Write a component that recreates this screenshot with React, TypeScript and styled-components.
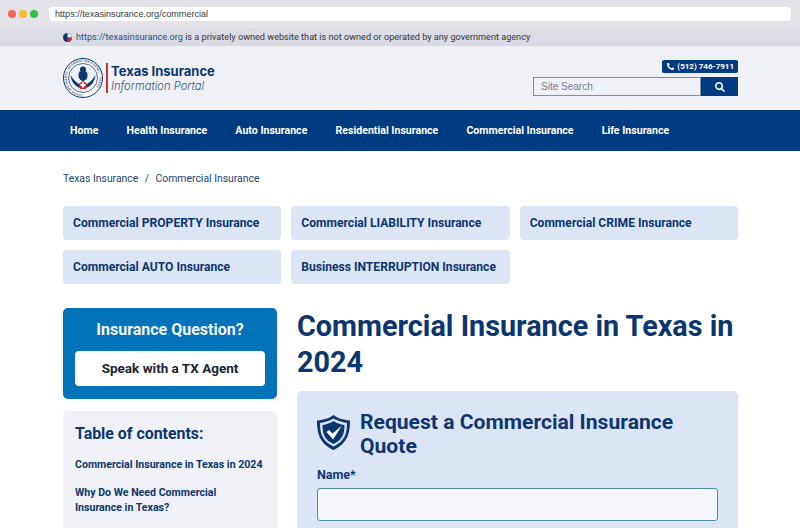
import { createGlobalStyle } from "styled-components";
import styled from "styled-components";
import { FaPhoneAlt, FaSearch } from "react-icons/fa";

const GlobalStyle = createGlobalStyle`
  html, body {
    margin: 0;
    padding: 0;
    background: #fff;
    overflow: hidden;
  }
  * {
    box-sizing: border-box;
  }
  body {
    font-family: "Roboto", "Liberation Sans", sans-serif;
  }
`;

const Page = styled.div`
  width: 800px;
  height: 528px;
  overflow: hidden;
`;

const BrowserBar = styled.div`
  height: 28px;
  background: #e3e3e9;
  display: flex;
  align-items: flex-start;
  padding: 7px 9px 0 8px;
`;

const Dots = styled.div`
  display: flex;
  gap: 3px;
  width: 41px;
  padding-top: 3px;
`;

const Dot = styled.span<{ $color: string }>`
  width: 8px;
  height: 8px;
  border-radius: 50%;
  background: ${props => props.$color};
`;

const UrlBar = styled.div`
  flex: 1;
  height: 14px;
  background: #fff;
  border-radius: 4px;
  padding-left: 6px;
  font-family: "Liberation Sans", sans-serif;
  font-size: 9.1px;
  line-height: 14px;
  color: #3a3a40;
`;

const Notice = styled.div`
  height: 18px;
  background: linear-gradient(#dddee6, #d8d9e2);
  display: flex;
  align-items: center;
  gap: 4px;
  padding: 0 63px;
  font-size: 9.15px;
  color: #35353b;
  a {
    color: #1f4f8c;
  }
`;

const Header = styled.header`
  height: 64px;
  background: #f0f1f7;
  display: flex;
  justify-content: space-between;
  padding: 12px 62px 0 63px;
`;

const Logo = styled.div`
  display: flex;
  align-items: flex-start;
  gap: 3px;
`;

const LogoRule = styled.span`
  width: 2px;
  height: 30px;
  margin-top: 5px;
  background: #c8372f;
`;

const LogoText = styled.div`
  padding-top: 5px;
`;

const LogoTitle = styled.div`
  font-family: "Inter", sans-serif;
  font-size: 13px;
  line-height: 16px;
  font-weight: 700;
  color: #0c366f;
`;

const LogoSub = styled.div`
  font-family: "Inter", sans-serif;
  font-size: 11.2px;
  line-height: 14px;
  font-style: italic;
  font-weight: 300;
  color: #3d5373;
`;

const HeaderRight = styled.div`
  display: flex;
  flex-direction: column;
  align-items: flex-end;
  gap: 4px;
  padding-top: 2px;
`;

const Phone = styled.div`
  height: 13px;
  padding: 0 4px 0 5px;
  display: flex;
  align-items: center;
  gap: 3px;
  background: #003a80;
  border-radius: 2px;
  color: #fff;
  font-size: 8px;
  font-weight: 700;
  svg {
    width: 7px;
    height: 7px;
  }
`;

const SearchRow = styled.div`
  display: flex;
  width: 205px;
  height: 19px;
`;

const SearchInput = styled.div`
  flex: 1;
  border: 1px solid #6f93a8;
  padding-left: 7px;
  font-family: "Liberation Sans", sans-serif;
  font-size: 10px;
  line-height: 17px;
  color: #7b7b85;
`;

const SearchButton = styled.div`
  width: 37px;
  background: #003a80;
  color: #fff;
  display: flex;
  align-items: center;
  justify-content: center;
  svg {
    width: 10px;
    height: 10px;
  }
`;

const Nav = styled.nav`
  height: 41px;
  background: #003a80;
  display: flex;
  align-items: center;
  gap: 28.1px;
  padding-left: 70px;
`;

const NavItem = styled.a`
  color: #fff;
  font-size: 10.6px;
  font-weight: 700;
`;

const Main = styled.main`
  padding: 0 62px 0 63px;
`;

const Crumbs = styled.div`
  display: flex;
  gap: 6.5px;
  padding-top: 21px;
  height: 55px;
  font-size: 10.4px;
  line-height: 13px;
  color: #1d4474;
`;

const Tiles = styled.div`
  display: grid;
  grid-template-columns: repeat(3, 1fr);
  gap: 10px;
  margin-bottom: 24px;
`;

const Tile = styled.a`
  height: 34px;
  padding-left: 10px;
  display: flex;
  align-items: center;
  background: #dce5f6;
  border-radius: 4px;
  color: #0c366f;
  font-size: 12.1px;
  font-weight: 700;
`;

const Columns = styled.div`
  display: grid;
  grid-template-columns: 214px 1fr;
  gap: 20px;
`;

const Sidebar = styled.aside`
  display: flex;
  flex-direction: column;
  gap: 12px;
`;

const AgentCard = styled.div`
  height: 91px;
  padding: 13px 12px 12px;
  background: #0272b9;
  border-radius: 5px;
  text-align: center;
`;

const AgentTitle = styled.div`
  color: #f2f6fb;
  font-size: 16px;
  font-weight: 700;
  line-height: 18px;
  margin-bottom: 12px;
`;

const AgentButton = styled.div`
  height: 35px;
  line-height: 35px;
  background: #fff;
  border-radius: 4px;
  color: #1c2432;
  font-size: 13.5px;
  font-weight: 700;
`;

const Toc = styled.div`
  height: 200px;
  padding: 14px 12px;
  background: #f0f1f7;
  border-radius: 5px;
`;

const TocTitle = styled.div`
  color: #0c366f;
  font-size: 15.9px;
  font-weight: 700;
  line-height: 18px;
  margin-bottom: 14px;
`;

const TocLink = styled.a`
  display: block;
  color: #0c366f;
  font-size: 10.6px;
  font-weight: 700;
  line-height: 15px;
  margin-bottom: 13px;
`;

const Content = styled.div``;

const Heading = styled.h1`
  margin: 0 0 11px;
  color: #0c366f;
  font-size: 28.8px;
  font-weight: 700;
  line-height: 36px;
`;

const QuoteCard = styled.div`
  height: 200px;
  padding: 20px;
  background: #dce5f6;
  border-radius: 5px;
`;

const QuoteHead = styled.div`
  display: flex;
  align-items: center;
  gap: 10px;
  margin-bottom: 9px;
  svg {
    flex: none;
    margin-top: -5px;
  }
`;

const QuoteTitle = styled.h2`
  margin: -1px 0 1px;
  color: #0c366f;
  font-size: 21.1px;
  font-weight: 700;
  line-height: 24px;
`;

const FieldLabel = styled.div`
  color: #0c366f;
  font-size: 12.5px;
  font-weight: 700;
  line-height: 14px;
  margin-bottom: 6px;
`;

const FieldInput = styled.div`
  height: 33px;
  background: #f4f6fb;
  border: 1px solid #4f8aa8;
  border-radius: 3px;
`;

const navItems = [
  "Home",
  "Health Insurance",
  "Auto Insurance",
  "Residential Insurance",
  "Commercial Insurance",
  "Life Insurance",
];

const tiles = [
  "Commercial PROPERTY Insurance",
  "Commercial LIABILITY Insurance",
  "Commercial CRIME Insurance",
  "Commercial AUTO Insurance",
  "Business INTERRUPTION Insurance",
];

function Seal() {
  return (
    <svg width="40" height="40" viewBox="0 0 40 40">
      <circle cx="20" cy="20" r="19.5" fill="#fff" stroke="#0c366f" strokeWidth="1" />
      <circle cx="20" cy="20" r="14.5" fill="#eef1f7" stroke="#0c366f" strokeWidth="0.7" />
      <defs>
        <path id="sealRing" d="M20 36.200a16.200 16.200 0 1 1 .01 0" />
      </defs>
      <text fontSize="3" fontWeight="700" fill="#2a4a78" letterSpacing="0.35">
        <textPath href="#sealRing">TEXAS INSURANCE INFORMATION PORTAL · TEXAS</textPath>
      </text>
      <circle cx="20" cy="11.500" r="3" fill="#0c366f" />
      <path d="M16.500 13.500h7c1.500 2.500 1.500 6-.5 8l-3 2-3-2c-2-2-2-5.500-.5-8z" fill="#0c366f" />
      <path d="M7.500 17c.5 6.500 4.500 11.500 10.500 13.500l1-3c-4-1.500-8.500-5-11.500-10.500z" fill="#0c366f" />
      <path d="M32.500 17c-.5 6.500-4.500 11.500-10.500 13.500l-1-3c4-1.500 8.500-5 11.500-10.500z" fill="#0c366f" />
      <path d="M20 23l4.500 3-1.500 5h-6l-1.500-5z" fill="#c8312b" />
      <path d="M19 24.500h2V26h1.500v2H21v1.500h-2V28h-1.500v-2H19z" fill="#fff" />
    </svg>
  );
}

function TexasDot() {
  return (
    <svg width="9" height="9" viewBox="0 0 9 9">
      <circle cx="4.500" cy="4.500" r="4.500" fill="#0c366f" />
      <path d="M4.500 0A4.500 4.500 0 0 1 9 4.500H4.500z" fill="#eef0f6" />
      <path d="M9 4.500A4.500 4.500 0 0 1 4.500 9V4.500z" fill="#c8312b" />
    </svg>
  );
}

function ShieldCheck() {
  return (
    <svg width="33" height="35" viewBox="0 0 33 35">
      <path d="M16.500 0C20 3 26 5 33 5.500c0 12-2 22.500-16.500 29.500C2 28 0 17.500 0 5.500 7 5 13 3 16.500 0z" fill="#0c366f" />
      <path d="M16.500 3.500C20 5.500 25 7.500 30 8c0 10-2 18-13.500 23.500C5 26 3 18 3 8c5-.5 10-2.500 13.500-4.500z" fill="#dce5f6" />
      <path d="M16.500 6C19.500 8 23.500 9.500 27.500 10c0 8-1.500 15-11 19C7 25 5.500 18 5.500 10c4-.5 8-2 11-4z" fill="#0c366f" />
      <path d="M9.500 17l2.500-2 3.500 3.500 9.500-8L16 24.500z" fill="#fff" />
    </svg>
  );
}

export default function App() {
  return (
    <Page>
      <GlobalStyle />
      <BrowserBar>
        <Dots>
          <Dot $color="#fa6257" />
          <Dot $color="#fbb92e" />
          <Dot $color="#2fc246" />
        </Dots>
        <UrlBar>https://texasinsurance.org/commercial</UrlBar>
      </BrowserBar>
      <Notice>
        <TexasDot />
        <span>
          <a>https://texasinsurance.org</a> is a privately owned website that is not owned or operated by any government agency
        </span>
      </Notice>
      <Header>
        <Logo>
          <Seal />
          <LogoRule />
          <LogoText>
            <LogoTitle>Texas Insurance</LogoTitle>
            <LogoSub>Information Portal</LogoSub>
          </LogoText>
        </Logo>
        <HeaderRight>
          <Phone>
            <FaPhoneAlt />
            (512) 746-7911
          </Phone>
          <SearchRow>
            <SearchInput>Site Search</SearchInput>
            <SearchButton>
              <FaSearch />
            </SearchButton>
          </SearchRow>
        </HeaderRight>
      </Header>
      <Nav>
        {navItems.map(item => (
          <NavItem key={item}>{item}</NavItem>
        ))}
      </Nav>
      <Main>
        <Crumbs>
          <span>Texas Insurance</span>
          <span>/</span>
          <span>Commercial Insurance</span>
        </Crumbs>
        <Tiles>
          {tiles.map(tile => (
            <Tile key={tile}>{tile}</Tile>
          ))}
        </Tiles>
        <Columns>
          <Sidebar>
            <AgentCard>
              <AgentTitle>Insurance Question?</AgentTitle>
              <AgentButton>Speak with a TX Agent</AgentButton>
            </AgentCard>
            <Toc>
              <TocTitle>Table of contents:</TocTitle>
              <TocLink>Commercial Insurance in Texas in 2024</TocLink>
              <TocLink>
                Why Do We Need Commercial
                <br />
                Insurance in Texas?
              </TocLink>
            </Toc>
          </Sidebar>
          <Content>
            <Heading>Commercial Insurance in Texas in 2024</Heading>
            <QuoteCard>
              <QuoteHead>
                <ShieldCheck />
                <QuoteTitle>Request a Commercial Insurance Quote</QuoteTitle>
              </QuoteHead>
              <FieldLabel>Name*</FieldLabel>
              <FieldInput />
            </QuoteCard>
          </Content>
        </Columns>
      </Main>
    </Page>
  );
}
